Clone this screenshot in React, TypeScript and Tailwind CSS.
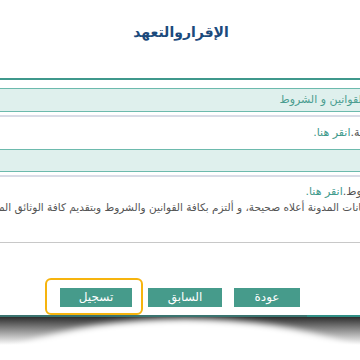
import React from "react";

const font = { fontFamily: '"DejaVu Sans", "Noto Sans", sans-serif' };

export default function App() {
  return (
    <div className="relative w-[360px] h-[360px] overflow-hidden bg-white" style={font}>
      <div dir="rtl" className="flex flex-col">
        {/* title */}
        <div className="h-[78px] flex justify-center pt-[22px]">
          <h1 className="text-[14px] font-bold text-[#1b4a7c] leading-[20px] mr-[-2px]">الإقراروالتعهد</h1>
        </div>
        <div className="h-[2px] bg-[#3f988c]" />
        <div className="h-[8px]" />
        {/* box 1 */}
        <div className="h-[24px] bg-[#dff0ed] border-y border-[#6dbaad] flex items-center overflow-hidden">
          <span className="whitespace-nowrap text-[11px] text-[#4a9d90] mr-[-5px]">القوانين و الشروط</span>
        </div>
        <div className="h-[3px]" />
        <div className="h-[2px] bg-[#d9dce6]" />
        {/* row 2 */}
        <div className="h-[32px] flex items-center overflow-hidden">
          <span className="whitespace-nowrap text-[11px] text-[#555] mr-[-24px]">
            العربية.<span className="text-[#3f9a8c]">انقر هنا.</span>
          </span>
        </div>
        {/* box 2 */}
        <div className="h-[23px] bg-[#dff0ed] border-y border-[#6dbaad]" />
        <div className="h-[3px]" />
        <div className="h-[2px] bg-[#d9dce6]" />
        {/* row 3 */}
        <div className="pt-[8px] flex flex-col items-start overflow-hidden">
          <span className="whitespace-nowrap text-[11px] leading-[13px] text-[#555] mr-[-24px]">
            الشروط.<span className="text-[#3f9a8c]">انقر هنا.</span>
          </span>
          <span className="whitespace-nowrap text-[10.5px] leading-[14px] mt-[2px] text-[#555] mr-[-14px]">
            البيانات المدونة أعلاه صحيحة، و ألتزم بكافة القوانين والشروط وبتقديم كافة الوثائق المطلوبة لذلك
          </span>
        </div>
        <div className="h-[28px]" />
        <div className="h-px bg-[#c8c8c8]" />
        {/* buttons */}
        <div className="flex items-start pt-[45px] mr-[60px] gap-[12px]">
          <button className="w-[66px] h-[19px] bg-[#469b8b] text-white text-[12px] leading-[19px]">عودة</button>
          <button className="w-[74px] h-[19px] bg-[#469b8b] text-white text-[12px] leading-[19px]">السابق</button>
          <div className="relative flex mr-[4px]">
            <span className="absolute top-[-10px] bottom-[-8px] left-[-15px] right-[-11px] border-2 border-[#f6b40e] rounded-[6px]" />
            <button className="relative w-[72px] h-[19px] bg-[#469b8b] text-white text-[12px] leading-[19px]">تسجيل</button>
          </div>
        </div>
      </div>
      {/* bottom line + curved shadow */}
      <svg className="absolute left-0 top-[315px]" width="360" height="45" viewBox="0 0 360 45">
        <defs>
          <linearGradient id="g" x1="0" y1="0" x2="0" y2="1">
            <stop offset="0" stopColor="#2e2e2e" stopOpacity="1" />
            <stop offset="1" stopColor="#2e2e2e" stopOpacity="0" />
          </linearGradient>
          <filter id="b" x="-20%" y="-50%" width="140%" height="200%">
            <feGaussianBlur stdDeviation="3" />
          </filter>
        </defs>
        <rect x="0" y="2" width="360" height="28" fill="url(#g)" />
        <ellipse cx="185" cy="90" rx="230" ry="86" fill="#fff" filter="url(#b)" />
        <rect x="0" y="0" width="307" height="2" fill="#3a7470" />
        <rect x="307" y="0" width="53" height="2" fill="#2f8f85" />
      </svg>
    </div>
  );
}
